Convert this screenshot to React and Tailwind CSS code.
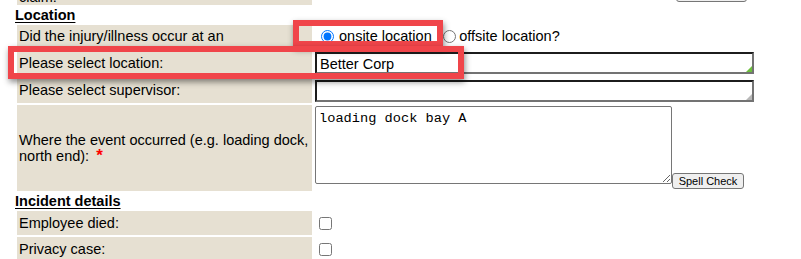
import React from 'react';

function Row({ label, height, children, labelClass = 'items-center', valueClass = 'items-center' }) {
    return (
        <div className={`flex pl-[17px] ${height}`}>
            <div className={`w-[295px] shrink-0 bg-[#e6e0d2] pl-[2px] flex ${labelClass}`}>{label}</div>
            <div className={`flex-1 pl-[2px] flex ${valueClass}`}>{children}</div>
        </div>
    );
}

function Heading({ children }) {
    return (
        <div className="h-[16px] pl-[15px] flex items-center">
            <span className="font-bold underline underline-offset-[2px] leading-none">{children}</span>
        </div>
    );
}

function TextField({ value, marker }) {
    return (
        <div className="relative ml-[1px] w-[439px] h-[22px]">
            <input
                type="text"
                defaultValue={value}
                className="w-full h-full border-2 border-t-[#1c1c1c] border-l-[#1c1c1c] border-r-[#737373] border-b-[#737373] bg-white pl-[3px] pt-[1px] text-[14.5px] text-black outline-none"
            />
            <span className={`absolute right-[2px] bottom-[2px] w-0 h-0 border-l-[6px] border-l-transparent border-b-[6px] ${marker}`}></span>
        </div>
    );
}

function SpellButton({ className }) {
    return (
        <button
            type="button"
            className={`h-[16px] border border-[#767676] rounded-[3px] bg-[#efefef] text-[11px] leading-none text-black flex items-center justify-center ${className}`}
        >
            Spell Check
        </button>
    );
}

export default function App() {
    return (
        <div className="relative w-[801px] h-[259px] overflow-hidden bg-white text-black text-[14.5px] font-['Liberation_Sans',Arial,sans-serif]">
            <div className="flex flex-col gap-[2px]">
                {/* cut-off previous row */}
                <div className="-mt-[19px]">
                    <Row
                        height="h-[24px]"
                        labelClass="items-start pt-[8px] leading-[17px]"
                        label="claim:"
                        valueClass="items-end pb-[3px]"
                    >
                        <SpellButton className="ml-[362px] w-[71px] h-[18px]" />
                    </Row>
                </div>

                <Heading>Location</Heading>

                <Row height="h-[23px]" labelClass="items-center pt-[1px]" label="Did the injury/illness occur at an">
                    <input type="radio" name="loc" defaultChecked className="ml-[7px] w-[13px] h-[13px] m-0" />
                    <span className="ml-[5px] pt-[1px]">onsite location</span>
                    <input type="radio" name="loc" className="ml-[11.5px] w-[13px] h-[13px] m-0" />
                    <span className="ml-[3px] pt-[1px]">offsite location?</span>
                </Row>

                <Row height="h-[26px]" labelClass="items-center pt-[1px]" label="Please select location:">
                    <TextField value="Better Corp" marker="border-b-[#6cbf3c]" />
                </Row>

                <Row height="h-[25px]" labelClass="items-center pt-[1px]" label="Please select supervisor:">
                    <TextField value="" marker="border-b-[#b8b8b8]" />
                </Row>

                <Row
                    height="h-[86px]"
                    labelClass="items-center leading-[16px]"
                    label={
                        <span>
                            Where the event occurred (e.g. loading dock, north end):
                            <span className="ml-[7px] text-[17px] leading-[16px] text-[#ff0000] font-bold">*</span>
                        </span>
                    }
                    valueClass="items-start pt-[1px]"
                >
                    <textarea
                        defaultValue="loading dock bay A"
                        className="ml-[1px] w-[357px] h-[78px] border border-[#767676] rounded-[2px] bg-white px-[3px] pt-[4px] text-[13.67px] leading-[16px] text-black font-['Liberation_Mono',monospace] outline-none"
                    />
                    <SpellButton className="mt-[67px] w-[72px]" />
                </Row>

                <Heading>Incident details</Heading>

                <Row height="h-[24px]" labelClass="items-center pt-[1px]" label="Employee died:">
                    <input type="checkbox" className="ml-[5px] w-[13px] h-[13px] m-0" />
                </Row>

                <Row height="h-[24px]" labelClass="items-center pt-[1px]" label="Privacy case:">
                    <input type="checkbox" className="ml-[5px] w-[13px] h-[13px] m-0" />
                </Row>
            </div>

            {/* annotation boxes */}
            <div className="absolute left-[293px] top-[20px] w-[150px] h-[27px] border-[6px] border-[#f0454a] shadow-[1px_3px_6px_rgba(0,0,0,0.45)]"></div>
            <div className="absolute left-[8px] top-[46px] w-[456px] h-[33px] border-[6px] border-[#f0454a] shadow-[1px_3px_6px_rgba(0,0,0,0.45)]"></div>
        </div>
    );
}
